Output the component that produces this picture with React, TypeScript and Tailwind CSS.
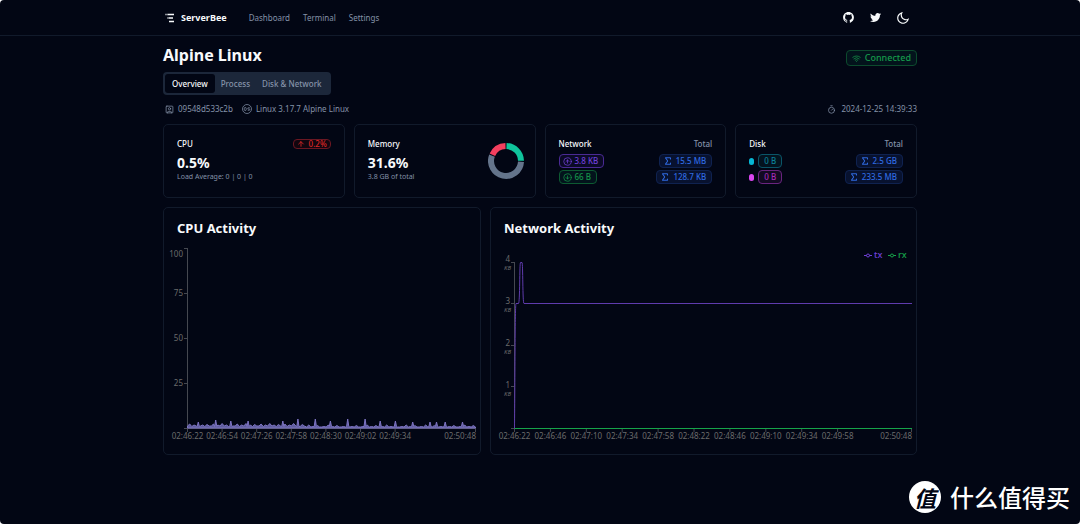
import type { ReactNode } from "react";
import { ArrowUp, CircleArrowDown, CircleArrowUp, Sigma, SquareUser, Timer, Wifi } from "lucide-react";
import { RiGithubFill, RiMoonLine, RiTwitterFill } from "react-icons/ri";

function BrandIcon() {
  return (
    <svg viewBox="0 0 10 10" className="size-[10px]" fill="none" stroke="currentColor" strokeWidth="1.3">
      <path d="M2.5 1.5H9M3.5 5h4.5M4 8.5h5" />
      <path d="M0 1.5h2.5M2 5h1.5" opacity="0.55" />
    </svg>
  );
}

function OsIcon() {
  return (
    <svg viewBox="0 0 20 20" className="size-[10px]" fill="none" stroke="currentColor" strokeWidth="1.5">
      <circle cx="10" cy="10" r="9" />
      <rect x="4.5" y="7" width="4" height="6" rx="2" />
      <path d="M15.5 7.5h-3a1 1 0 0 0-1 1v.5a1 1 0 0 0 1 1h2a1 1 0 0 1 1 1v.5a1 1 0 0 1-1 1h-3" />
    </svg>
  );
}

function Card({ children, className = "" }: { children: ReactNode; className?: string }) {
  return <section className={`rounded-[5px] border border-[#111a2b] ${className}`}>{children}</section>;
}

const tones = {
  violet: "border-[#4a2a94] bg-[#0b0a26] text-[#7040d8]",
  green: "border-[#0d5a32] bg-[#03131c] text-[#15944a]",
  blue: "border-[#0f2250] bg-[#08122f] text-[#2f6ae0]",
  cyan: "border-[#0a5568] bg-[#03131f] text-[#0c8098]",
  fuchsia: "border-[#6a2480] bg-[#120a22] text-[#a62bb8]",
};

function Badge({ tone, icon, children }: { tone: keyof typeof tones; icon?: ReactNode; children: ReactNode }) {
  return (
    <span className={`inline-flex h-[14px] items-center rounded-[4px] border pr-[5px] font-medium ${icon ? "gap-[3px] pl-[3px]" : "pl-[5px]"} ${tones[tone]}`}>
      {icon}
      {children}
    </span>
  );
}

function Total({ children }: { children: ReactNode }) {
  return (
    <Badge tone="blue" icon={<Sigma className="size-[10px]" strokeWidth={2.5} />}>
      {children}
    </Badge>
  );
}

const spikes: [number, number][] = [
  [34.3, 6], [51.7, 8], [67.7, 7], [84.3, 7], [117.7, 7], [134, 9], [150.3, 9], [166.3, 7], [183.7, 9],
  [200, 9], [216.3, 7], [232.3, 7], [249.7, 6], [266, 6], [271.7, 6], [282, 6], [298.3, 6],
];
const busy = [2, 4, 1.5, 3, 2, 4.5, 2, 3, 1.5, 3.5, 2];
const quiet = [1.5, 1, 3, 1, 1.5, 1, 2.5, 1, 1];

function cpuPath() {
  let d = "M23.5 188";
  for (let i = 0; i <= 133; i++) {
    const x = 23.5 + (i * 288) / 133;
    const spike = spikes.find(([sx]) => Math.abs(sx - x) <= 1.08);
    const level = i < 55 ? busy[i % busy.length] : quiet[i % quiet.length];
    d += spike
      ? `L${(x - 1.1).toFixed(1)} 186.5L${x.toFixed(1)} ${188 - spike[1]}L${(x + 1.1).toFixed(1)} 186.5`
      : `L${x.toFixed(1)} ${188 - level}`;
  }
  return d + "V188Z";
}

const cpuTimes = ["02:46:22", "02:46:54", "02:47:26", "02:47:58", "02:48:30", "02:49:02", "02:49:34"];
const netTimes = [
  "02:46:22", "02:46:46", "02:47:10", "02:47:34", "02:47:58",
  "02:48:22", "02:48:46", "02:49:10", "02:49:34", "02:49:58",
];

function CpuChart() {
  return (
    <svg viewBox="0 0 316 214" className="block w-full text-[8px]" role="img" aria-label="CPU usage over time">
      <g stroke="#454850" strokeWidth="1">
        <path d="M23.5 8V188.5M23.5 188.5H312" />
        {[8, 53, 98, 143, 188].map((y) => <path key={y} d={`M20 ${y + 0.5}h3.5`} />)}
        {cpuTimes.map((t, i) => <path key={t} d={`M${23.5 + i * 34.6} 188v4`} />)}
        <path d="M311.5 188v4" />
      </g>
      <g fill="#6b6b6b">
        {[["100", 17], ["75", 56], ["50", 101], ["25", 146]].map(([label, y]) => (
          <text key={label} x="19" y={y} textAnchor="end">{label}</text>
        ))}
        {cpuTimes.map((t, i) => <text key={t} x={23.5 + i * 34.6} y="199" textAnchor="middle">{t}</text>)}
        <text x="312" y="199" textAnchor="end">02:50:48</text>
      </g>
      <path d={cpuPath()} fill="#8884d8" fillOpacity="0.7" stroke="#7e74c4" strokeWidth="1" />
    </svg>
  );
}

function LegendItem({ x, color, label }: { x: number; color: string; label: string }) {
  return (
    <g>
      <path d={`M${x} 15.5h2.5M${x + 5.5} 15.5h2.5`} stroke={color} />
      <circle cx={x + 4} cy="15.5" r="1.5" fill="none" stroke={color} />
      <text x={x + 10} y="18" fill={color} fontSize="9" fontWeight="500">{label}</text>
    </g>
  );
}

function NetworkChart() {
  return (
    <svg viewBox="0 0 425 214" className="block w-full text-[8px]" role="img" aria-label="Network traffic over time">
      <LegendItem x={373} color="#7040d8" label="tx" />
      <LegendItem x={397} color="#16a34a" label="rx" />
      <g stroke="#454850" strokeWidth="1">
        <path d="M23.5 22V188.5" />
        {[22, 63, 105, 146, 188].map((y) => <path key={y} d={`M20 ${y + 0.5}h3.5`} />)}
        {netTimes.map((t, i) => <path key={t} d={`M${23.5 + i * 35.9} 188v4`} />)}
        <path d="M420.5 188v4" />
      </g>
      <g fill="#6b6b6b">
        {[4, 3, 2, 1].map((n, i) => (
          <g key={n} textAnchor="end">
            <text x="19" y={22 + i * 42}>{n}</text>
            <text x="20" y={30 + i * 42} fontSize="6" fontStyle="italic">KB</text>
          </g>
        ))}
        {netTimes.map((t, i) => <text key={t} x={23.5 + i * 35.9} y="199" textAnchor="middle">{t}</text>)}
        <text x="421" y="199" textAnchor="end">02:50:48</text>
      </g>
      <path d="M23.5 188.5C24 138 24 64 25 63.5H27.5C29 63.5 28.5 22.5 29.5 22.5H31C32 22.5 31.5 63.5 33 63.5H421" fill="none" stroke="#5f3bad" />
      <path d="M23.5 188.5H421" stroke="#16a34a" strokeWidth="1.2" />
    </svg>
  );
}

export default function App() {
  return (
    <div className="bg-white">
      <div className="relative min-h-screen rounded-[4px] bg-[#020614] font-['Noto_Sans','Open_Sans',sans-serif] text-[8px] leading-3 text-slate-50">
        <header className="border-b border-[#111a2b]">
          <div className="mx-auto flex h-[35px] max-w-[754px] items-center pr-[7px] pl-[2px]">
            <a href="#home" className="flex items-center gap-[6px] text-[9px] font-bold">
              <BrandIcon />
              ServerBee
            </a>
            <nav className="ml-[22px] flex gap-[13px] text-[#8492a8]">
              <a href="#dashboard">Dashboard</a>
              <a href="#terminal">Terminal</a>
              <a href="#settings">Settings</a>
            </nav>
            <div className="ml-auto flex items-center gap-[14px]">
              <a href="#github" aria-label="GitHub"><RiGithubFill className="size-[13px]" /></a>
              <a href="#twitter" aria-label="Twitter"><RiTwitterFill className="size-[13px]" /></a>
              <button type="button" aria-label="Toggle theme"><RiMoonLine className="block size-[14px]" /></button>
            </div>
          </div>
        </header>

        <main className="mx-auto max-w-[754px] pt-2">
          <div className="flex items-start justify-between">
            <h1 className="text-[16px] leading-[22px] font-bold">Alpine Linux</h1>
            <span className="mt-[6px] flex h-4 items-center gap-1 rounded-[4px] border border-[#0c4a2d] bg-[#03131c] px-[5px] text-[9px] font-medium text-[#159a4b]">
              <Wifi className="size-[9px]" />
              Connected
            </span>
          </div>

          <div role="tablist" className="mt-[6px] flex h-[23px] w-fit items-center rounded-[4px] bg-[#1c273a] pr-[3px] pl-[2px] font-medium text-[#8492a8]">
            <button type="button" role="tab" aria-selected="true" className="h-[19px] rounded-[3px] bg-[#020614] px-[7px] text-slate-50">Overview</button>
            <button type="button" role="tab" aria-selected="false" className="px-[6px]">Process</button>
            <button type="button" role="tab" aria-selected="false" className="px-[6px]">Disk &amp; Network</button>
          </div>

          <div className="mt-2 flex h-3 items-center pl-[2px] text-[#8492a8]">
            <SquareUser className="mr-1 size-[9px]" />
            09548d533c2b
            <span className="ml-[9px] flex items-center gap-1">
              <OsIcon />
              Linux 3.17.7 Alpine Linux
            </span>
            <span className="ml-auto flex items-center gap-[5px]">
              <Timer className="size-[9px]" />
              2024-12-25 14:39:33
            </span>
          </div>

          <div className="mt-[9px] grid grid-cols-4 gap-[9px]">
            <Card className="h-[74px] p-[13px]">
              <div className="flex items-center justify-between font-medium">
                CPU
                <span className="flex h-[10px] items-center gap-1 rounded-[4px] border border-[#6b1722] bg-[#12060f] px-[3px] text-[#dc2626]">
                  <ArrowUp className="size-[8px]" strokeWidth={2.5} />
                  0.2%
                </span>
              </div>
              <p className="mt-[5px] text-[14px] leading-4 font-bold">0.5%</p>
              <p className="text-[7px] leading-3 text-[#8492a8]">Load Average: 0 | 0 | 0</p>
            </Card>

            <Card className="flex h-[74px] justify-between py-[13px] pr-[11px] pl-[13px]">
              <div>
                <p className="font-medium">Memory</p>
                <p className="mt-[5px] text-[14px] leading-4 font-bold">31.6%</p>
                <p className="text-[7px] leading-3 text-[#8492a8]">3.8 GB of total</p>
              </div>
              <svg viewBox="-18 -18 36 36" className="mt-[5px] size-[36px]" fill="none" strokeWidth="6" role="img" aria-label="Memory use">
                <path d="M.5-15A15 15 0 0 1 15-.2" stroke="#10c49c" />
                <path d="M15 .8A15 15 0 1 1-14-5.4" stroke="#64748b" />
                <path d="M-13.6-6.3A15 15 0 0 1-.5-15" stroke="#f43f5e" />
              </svg>
            </Card>

            <Card className="h-[74px] p-[13px]">
              <div className="flex justify-between font-medium">
                Network <span className="text-[#8492a8]">Total</span>
              </div>
              <div className="mt-1 flex flex-col gap-[2px]">
                <div className="flex justify-between">
                  <Badge tone="violet" icon={<CircleArrowUp className="size-[9px]" />}>3.8 KB</Badge>
                  <Total>15.5 MB</Total>
                </div>
                <div className="flex justify-between">
                  <Badge tone="green" icon={<CircleArrowDown className="size-[9px]" />}>66 B</Badge>
                  <Total>128.7 KB</Total>
                </div>
              </div>
            </Card>

            <Card className="h-[74px] p-[13px]">
              <div className="flex justify-between font-medium">
                Disk <span className="text-[#8492a8]">Total</span>
              </div>
              <div className="mt-1 flex flex-col gap-[2px]">
                <div className="flex items-center justify-between">
                  <span className="flex items-center gap-1">
                    <i className="h-[7px] w-[5px] rounded-full bg-[#06b6d4]" />
                    <Badge tone="cyan">0 B</Badge>
                  </span>
                  <Total>2.5 GB</Total>
                </div>
                <div className="flex items-center justify-between">
                  <span className="flex items-center gap-1">
                    <i className="h-[7px] w-[5px] rounded-full bg-[#d946ef]" />
                    <Badge tone="fuchsia">0 B</Badge>
                  </span>
                  <Total>233.5 MB</Total>
                </div>
              </div>
            </Card>
          </div>

          <div className="mt-[9px] grid grid-cols-7 gap-[9px]">
            <Card className="col-span-3 pt-[11px]">
              <h2 className="mb-[3px] px-[13px] text-[13px] leading-[18px] font-bold">CPU Activity</h2>
              <CpuChart />
            </Card>
            <Card className="col-span-4 pt-[11px]">
              <h2 className="mb-[3px] px-[13px] text-[13px] leading-[18px] font-bold">Network Activity</h2>
              <NetworkChart />
            </Card>
          </div>
        </main>

        <div className="absolute right-[10px] bottom-[11px] flex items-center gap-[9px] font-['Noto_Sans_CJK_SC',sans-serif] text-[24px] leading-8 font-medium text-white">
          <span className="flex size-8 items-center justify-center rounded-full bg-white text-[22px] font-bold text-[#020614] italic">值</span>
          什么值得买
        </div>
      </div>
    </div>
  );
}
